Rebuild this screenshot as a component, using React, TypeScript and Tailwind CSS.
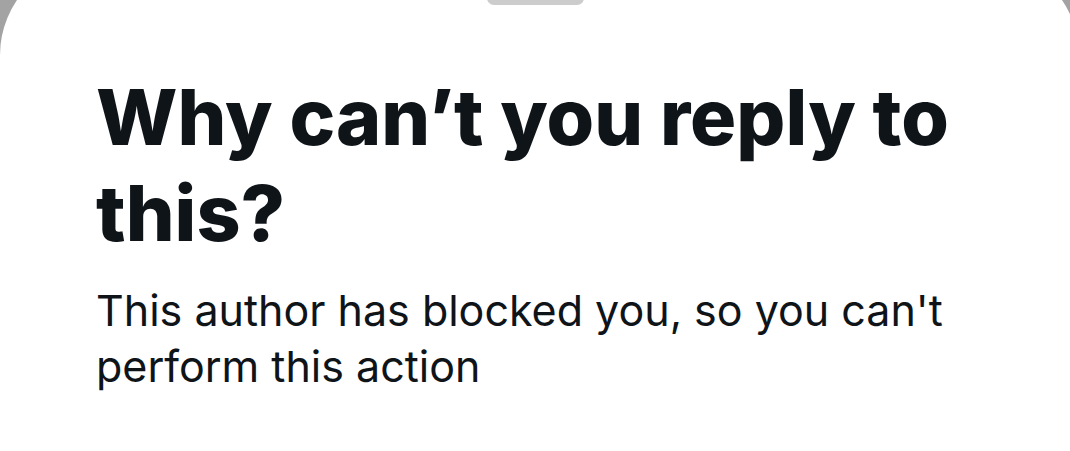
export default function App() {
  return (
    <div className="h-[451px] w-full overflow-hidden bg-[#a3a3a3]">
      <div className="-mt-[42px] -mr-[9px] h-[520px] rounded-t-[97px] bg-white pt-[33px]">
        <div className="mx-auto h-[14px] w-[97px] translate-x-[-4px] rounded-full bg-[#cccccc]" />
        <div className="pl-[96px] pr-[110px] pt-[64px] font-['Inter',sans-serif] text-[#0f1419]">
          <h1 className="text-[77px] leading-[96px] font-extrabold">
            Why can’t you reply to this?
          </h1>
          <p className="mt-[21px] text-[43px] leading-[56px] font-normal">
            This author has blocked you, so you can't perform this action
          </p>
        </div>
      </div>
    </div>
  );
}
